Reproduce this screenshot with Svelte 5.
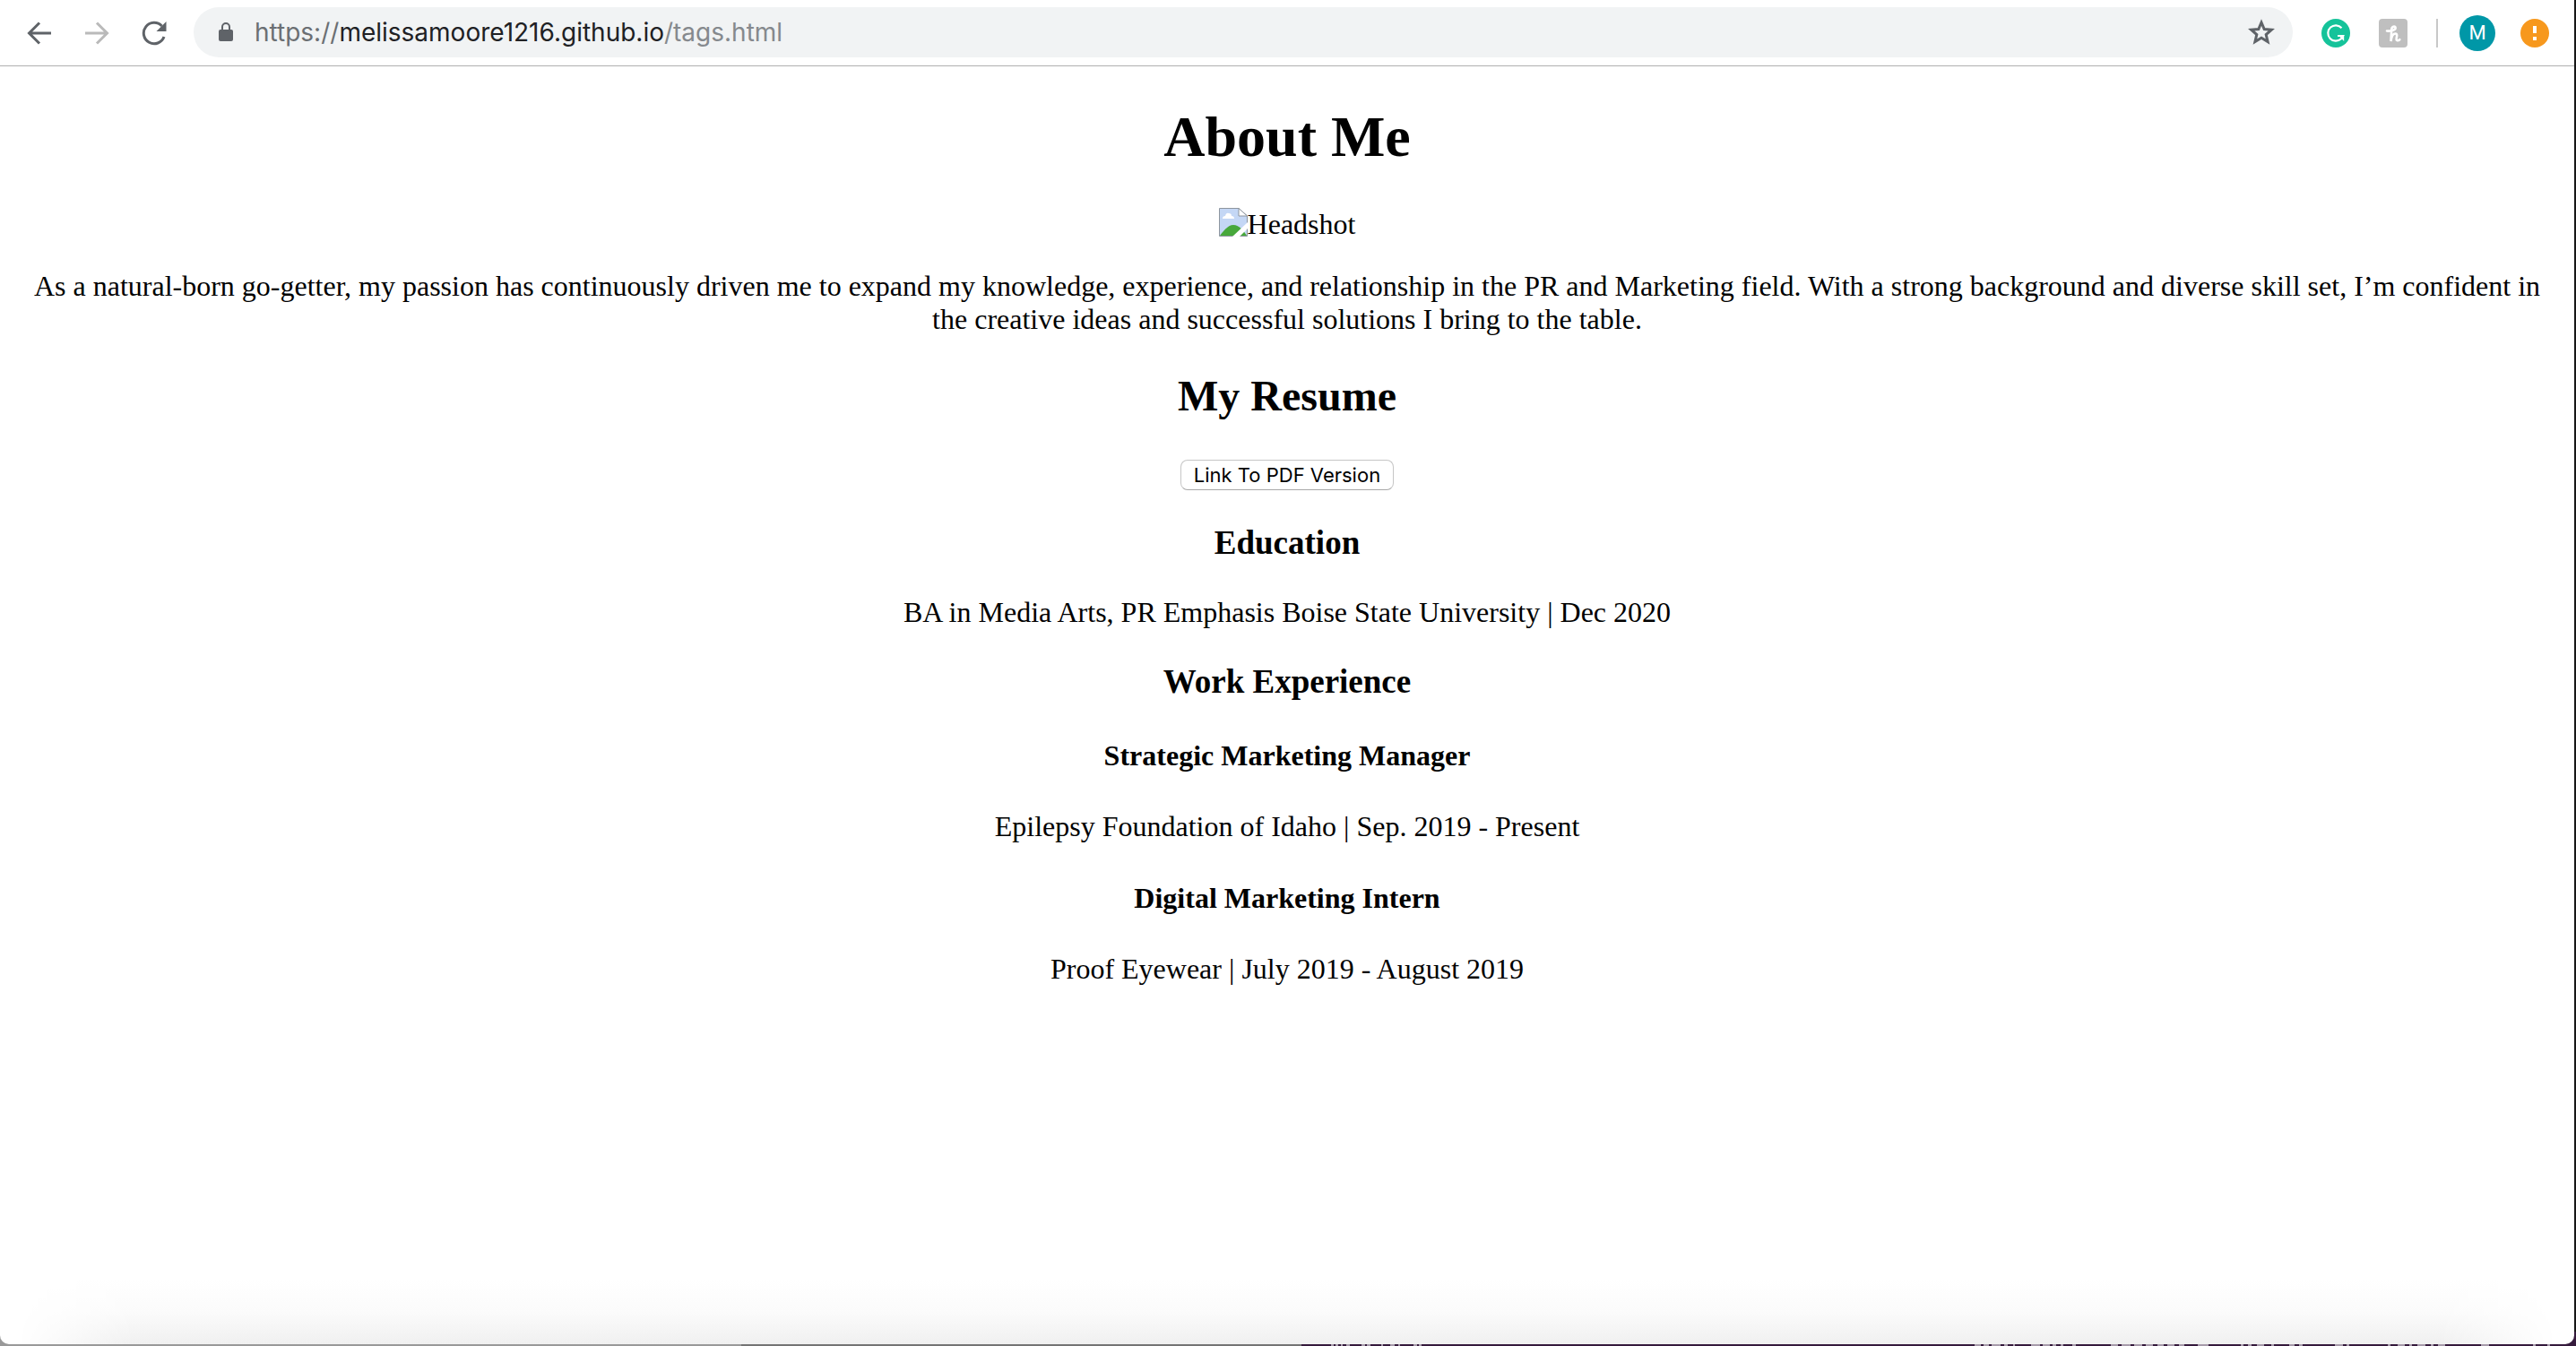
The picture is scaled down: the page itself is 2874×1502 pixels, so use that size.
<script lang="ts">
  const jobs = [
    { title: 'Strategic Marketing Manager', detail: 'Epilepsy Foundation of Idaho | Sep. 2019 - Present' },
    { title: 'Digital Marketing Intern', detail: 'Proof Eyewear | July 2019 - August 2019' }
  ];
  // x position and width of the marks of the desktop text under the window
  const marks = [
    [1485, 3], [1490, 3], [1496, 2], [1502, 4], [1519, 4], [1525, 4], [1541, 2], [1551, 5], [1560, 2], [1577, 4], [1583, 3],
    [2203, 7], [2213, 6], [2222, 10], [2236, 4], [2246, 2], [2266, 10], [2279, 8], [2290, 4], [2299, 3], [2312, 4],
    [2355, 8], [2367, 10], [2381, 9], [2394, 8], [2407, 7], [2418, 8], [2431, 6], [2452, 12],
    [2500, 3], [2508, 4], [2518, 8], [2534, 3], [2554, 6], [2565, 4], [2605, 9], [2618, 3],
    [2664, 3], [2675, 8], [2688, 3], [2697, 9], [2712, 3], [2720, 8], [2768, 9], [2826, 3], [2842, 3]
  ];
</script>

<div class="desktop">
  <div class="window">
    <header class="toolbar">
      <nav class="nav" aria-label="History">
        <button class="icon-button" aria-label="Back">
          <svg viewBox="0 0 28 28"><path d="M27 14H3M14 2.500 2.500 14 14 25.500" /></svg>
        </button>
        <button class="icon-button disabled" aria-label="Forward">
          <svg viewBox="0 0 28 28"><path d="M1 14h24M14 2.500 25.500 14 14 25.500" /></svg>
        </button>
        <button class="icon-button" aria-label="Reload">
          <svg viewBox="0 0 28 28"><path d="M25 18A11.700 11.700 0 1 1 22.500 6" /><path class="solid" d="M27.500 1v11h-11z" /></svg>
        </button>
      </nav>
      <div class="address">
        <svg class="lock" viewBox="0 0 16 22"><path d="M2 8h12q2 0 2 2v9q0 2-2 2H2q-2 0-2-2v-9q0-2 2-2z" fill="#5f6368" /><path d="M4 9V5a4 4 0 0 1 8 0v4" fill="none" stroke="#5f6368" stroke-width="2" /></svg>
        <a class="url" href="#top"><span class="scheme">https://</span>melissamoore1216.github.io<span class="path">/tags.html</span></a>
        <button class="icon-button star" aria-label="Bookmark this page">
          <svg viewBox="0 0 30 30"><path d="M15 4l3.200 7.500 8.200.7-6.200 5.400 1.900 8-7.100-4.300-7.100 4.300 1.900-8-6.200-5.400 8.200-.7z" /></svg>
        </button>
      </div>
      <div class="extensions">
        <button class="icon-button" aria-label="Grammarly">
          <svg class="ext" viewBox="0 0 32 32"><circle cx="16" cy="16" r="16" fill="#15c39a" /><path d="M22.500 10.200A8.700 8.700 0 1 0 22 22.300l2-3.300h-6" fill="none" stroke="#fff" stroke-width="2.200" /><path d="M19 18.500h6.200V25z" fill="#fff" /></svg>
        </button>
        <button class="icon-button honey" aria-label="Honey">
          <svg class="ext" viewBox="0 0 32 32"><rect width="32" height="32" rx="4" fill="#bfbfbf" /><path d="M9 13.500c5 .5 10-1 9.600-3.600-.4-2.400-4.400-1.400-4.400 2.100L13.500 25c.6-4.500 2.500-8.500 5-8.500 2.300 0 1.700 3 1.200 5-.6 2.600 1.300 3.700 3.600 1.700" fill="none" stroke="#fff" stroke-width="2.600" stroke-linecap="round" /></svg>
        </button>
        <span class="divider"></span>
        <button class="avatar" aria-label="Profile M">M</button>
        <button class="icon-button" aria-label="Update available">
          <svg class="ext" viewBox="0 0 32 32"><circle cx="16" cy="16" r="16" fill="#f7981d" /><path d="M14 8h4v8h-4zM14 20h4v4h-4z" fill="#fff" /></svg>
        </button>
      </div>
    </header>

    <main id="top">
      <h1>About Me</h1>
      <div class="headshot" role="img" aria-label="Headshot">
        <svg class="broken" viewBox="0 0 32 32">
          <path d="M.5.500H22L31.500 9v22.500H.5z" fill="#c4d7f5" stroke="#8d959e" />
          <path d="M1 31C6 24 11 19 16 19s10 4 15 12z" fill="#47a83b" />
          <path d="M4 12q0-3 3-3 1-4 4-3 3 0 3 3 3 0 3 3z" fill="#fff" />
          <path d="M22 .5V9h9.500z" fill="#fff" stroke="#8d959e" />
          <path d="M32 16v7l-9 9h-8z" fill="#fff" />
        </svg><span>Headshot</span>
      </div>
      <p>As a natural-born go-getter, my passion has continuously driven me to expand my knowledge, experience, and relationship in the PR and Marketing field. With a strong background and diverse skill set, I’m confident in the creative ideas and successful solutions I bring to the table.</p>
      <h2>My Resume</h2>
      <button class="pdf">Link To PDF Version</button>
      <h3>Education</h3>
      <p>BA in Media Arts, PR Emphasis Boise State University | Dec 2020</p>
      <h3>Work Experience</h3>
      {#each jobs as job}
        <h4>{job.title}</h4>
        <p>{job.detail}</p>
      {/each}
    </main>
    <div class="shade"></div>
  </div>
  <svg class="marks" aria-hidden="true">
    {#each marks as [x, w]}
      <rect {x} y="0" width={w} height="2" />
    {/each}
  </svg>
</div>

<style>
  :global(body) { margin: 0; }
  .desktop {
    display: flex;
    flex-direction: column;
    min-height: 100vh;
    box-sizing: border-box;
    padding-right: 2px;
    background:
      linear-gradient(90deg, #999 0 827px, #747474 827px 1452px, #351a3c 1452px) bottom / 100% 16px no-repeat,
      #171717;
  }
  .window {
    flex: 1;
    display: flex;
    flex-direction: column;
    overflow: hidden;
    background: #fff;
    border-radius: 0 0 10px 10px;
  }
  .marks { display: block; width: 100%; height: 2px; fill: #a79bab; }
  .toolbar {
    display: flex;
    align-items: center;
    height: 74px;
    box-sizing: border-box;
    padding: 0 28px 0 30px;
    border-bottom: 1px solid #b0b0b0;
    font-family: Roboto, sans-serif;
  }
  button { font: inherit; cursor: pointer; }
  .icon-button {
    display: block;
    padding: 0;
    border: 0;
    background: none;
    color: #5f6368;
  }
  .icon-button svg {
    display: block;
    width: 28px;
    height: 28px;
    fill: none;
    stroke: currentColor;
    stroke-width: 3;
  }
  .icon-button .solid { fill: currentColor; stroke: none; }
  .icon-button .ext { width: 32px; height: 32px; stroke: none; }
  .icon-button.disabled { color: #bababa; }
  .nav { display: flex; gap: 36px; }
  .address {
    flex: 1;
    display: flex;
    align-items: center;
    height: 56px;
    box-sizing: border-box;
    margin: 0 32px 2px 30px;
    padding: 0 20px 0 28px;
    border-radius: 28px;
    background: #f1f3f4;
  }
  .lock { width: 16px; height: 22px; }
  .url {
    flex: 1;
    margin-left: 24px;
    font: 28px/36px Inter, sans-serif;
    color: #202124;
    text-decoration: none;
  }
  .scheme { color: #6b6f73; }
  .path { color: #85898d; }
  .icon-button.star svg { width: 30px; height: 30px; }
  .extensions { display: flex; align-items: center; }
  .honey { margin: 0 32px; }
  .divider { width: 2px; height: 32px; background: #c8c8c8; }
  .avatar {
    width: 40px;
    height: 40px;
    margin: 0 28px 0 24px;
    padding: 0;
    border: 0;
    border-radius: 50%;
    background: #0097a7;
    color: #fff;
    font-size: 22px;
  }
  main {
    flex: 1;
    padding: 0 16px;
    color: #000;
    font: 32px/37px "Liberation Serif", "Times New Roman", serif;
    text-align: center;
  }
  h1 { margin: 42px 0; font-size: 64px; line-height: 74px; }
  h2 { margin: 40px 0; font-size: 48px; line-height: 54px; }
  h3 { margin: 38px 0; font-size: 37px; line-height: 42px; }
  h4 { margin: 43px 0; font-size: 32px; line-height: 36px; }
  p { margin: 32px 0; }
  .headshot { display: flex; justify-content: center; }
  .broken { width: 32px; height: 32px; }
  .pdf {
    height: 34px;
    padding: 0 14px;
    border: 1px solid #c6c6c6;
    border-bottom-color: #a8a8a8;
    border-radius: 8px;
    background: #fff;
    color: #000;
    font: 22px/30px Inter, sans-serif;
  }
  .shade {
    height: 72px;
    background: linear-gradient(#fff, #fbfbfb 50%, #f0f0f0);
    mask-image: linear-gradient(90deg, transparent 20px, #000 150px calc(100% - 150px), transparent calc(100% - 20px));
  }
</style>
